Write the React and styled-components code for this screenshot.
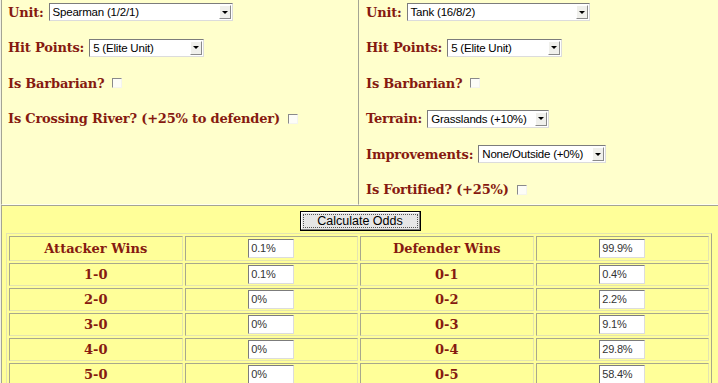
import React from 'react'
import styled, { createGlobalStyle } from 'styled-components'

const GlobalStyle = createGlobalStyle`
	body {
		margin: 0;
		background: #ffffff;
		font-family: "DejaVu Serif", Georgia, serif;
	}
`

const Page = styled.div`
	width: 718px;
	height: 383px;
	overflow: hidden;
	display: flex;
	flex-direction: column;
	border-left: 1px solid #f2f2e4;
	box-sizing: border-box;
`

const Top = styled.div`
	display: grid;
	grid-template-columns: 357px 1fr;
	height: 205px;
	flex: none;
`

const Panel = styled.div`
	background: #ffffcc;
	border-left: 1px solid #a4a494;
	border-bottom: 1px solid #fffff0;
	padding-left: ${props => props.$pad || 6}px;
	display: flex;
	flex-direction: column;
	gap: 11.6px;
`

const Row = styled.div`
	display: flex;
	align-items: center;
	height: 24px;
	white-space: nowrap;
`

const Label = styled.span`
	font-family: "DejaVu Serif", Georgia, serif;
	font-weight: bold;
	font-size: 13px;
	letter-spacing: -0.2px;
	color: #861a10;
`

const SelectBox = styled.div`
	display: inline-flex;
	align-items: stretch;
	box-sizing: border-box;
	width: ${props => props.$w}px;
	height: 18px;
	margin-left: 5px;
	background: #ffffff;
	border: 1px solid;
	border-color: #7c7c7c #dcdcdc #dcdcdc #7c7c7c;
	font-family: "Liberation Sans", Arial, sans-serif;
	font-size: 11.5px;
	color: #000;
`

const SelectText = styled.span`
	flex: 1;
	padding: 0 3px;
	line-height: 16px;
	overflow: hidden;
	letter-spacing: -0.2px;
`

const SelectArrow = styled.span`
	width: 12px;
	margin: 1px;
	box-sizing: border-box;
	background: #f0f0ec;
	border: 1px solid;
	border-color: #ffffff #8a8a8a #8a8a8a #ffffff;
	display: flex;
	align-items: center;
	justify-content: center;
	&::after {
		content: '';
		border-left: 3px solid transparent;
		border-right: 3px solid transparent;
		border-top: 3px solid #000;
	}
`

const Check = styled.span`
	display: inline-block;
	box-sizing: border-box;
	width: 10px;
	height: 10px;
	margin-left: 8px;
	background: #fdfdf8;
	border: 1px solid;
	border-color: #8a8a8a #f4f4f0 #f4f4f0 #8a8a8a;
`

const Bottom = styled.div`
	flex: 1;
	background: #ffff99;
	border-top: 1px solid #a4a494;
	border-left: 1px solid #a4a494;
	display: flex;
	flex-direction: column;
	align-items: center;
	padding-top: 5px;
`

const CalcButton = styled.button`
	width: 121px;
	height: 20px;
	padding: 0;
	background: #e6e6e6;
	border: 1px solid #000;
	outline: 1px dotted #555;
	outline-offset: -4px;
	box-shadow: inset -1px -1px 0 #808080, inset 1px 1px 0 #ffffff;
	font-family: "Liberation Sans", Arial, sans-serif;
	font-size: 12.5px;
	color: #000;
`

const OddsTable = styled.table`
	margin-top: 2px;
	align-self: flex-start;
	margin-left: 4px;
	width: 706px;
	flex: none;
	border-collapse: separate;
	border-spacing: 2px;
	border: 1px solid;
	border-color: #e4e4b0 #a8a88c #a8a88c #e4e4b0;
	table-layout: fixed;
`

const Cell = styled.td`
	height: ${props => (props.$head ? 23 : 21)}px;
	padding: 0;
	text-align: center;
	border: 1px solid;
	border-color: #a8a88c #e4e4b0 #e4e4b0 #a8a88c;
	font-family: "DejaVu Serif", Georgia, serif;
	font-weight: bold;
	font-size: 13px;
	color: #861a10;
`

const Percent = styled.span`
	display: inline-block;
	box-sizing: border-box;
	width: 46px;
	height: 19px;
	vertical-align: middle;
	text-align: left;
	padding: 0 2px;
	background: #ffffff;
	border: 1px solid;
	border-color: #7c7c7c #dcdcdc #dcdcdc #7c7c7c;
	font-family: "Liberation Sans", Arial, sans-serif;
	font-weight: normal;
	font-size: 11px;
	line-height: 17px;
	color: #333;
	letter-spacing: -0.2px;
`

const Select = ({ w, children }) => (
	<SelectBox $w={w}>
		<SelectText>{children}</SelectText>
		<SelectArrow />
	</SelectBox>
)

const results = [
	['Attacker Wins', '0.1%', 'Defender Wins', '99.9%'],
	['1-0', '0.1%', '0-1', '0.4%'],
	['2-0', '0%', '0-2', '2.2%'],
	['3-0', '0%', '0-3', '9.1%'],
	['4-0', '0%', '0-4', '29.8%'],
	['5-0', '0%', '0-5', '58.4%'],
]

export default function App() {
	return (
		<Page>
			<GlobalStyle />
			<Top>
				<Panel $pad={6}>
					<Row>
						<Label>Unit:</Label>
						<Select w={184}>Spearman (1/2/1)</Select>
					</Row>
					<Row>
						<Label>Hit Points:</Label>
						<Select w={115}>5 (Elite Unit)</Select>
					</Row>
					<Row>
						<Label>Is Barbarian?</Label>
						<Check />
					</Row>
					<Row>
						<Label>Is Crossing River? (+25% to defender)</Label>
						<Check />
					</Row>
				</Panel>
				<Panel $pad={7}>
					<Row>
						<Label>Unit:</Label>
						<Select w={183}>Tank (16/8/2)</Select>
					</Row>
					<Row>
						<Label>Hit Points:</Label>
						<Select w={115}>5 (Elite Unit)</Select>
					</Row>
					<Row>
						<Label>Is Barbarian?</Label>
						<Check />
					</Row>
					<Row>
						<Label>Terrain:</Label>
						<Select w={122}>Grasslands (+10%)</Select>
					</Row>
					<Row>
						<Label>Improvements:</Label>
						<Select w={128}>None/Outside (+0%)</Select>
					</Row>
					<Row>
						<Label>Is Fortified? (+25%)</Label>
						<Check />
					</Row>
				</Panel>
			</Top>
			<Bottom>
				<CalcButton>Calculate Odds</CalcButton>
				<OddsTable>
					<tbody>
						{results.map((r, i) => (
							<tr key={i}>
								<Cell $head={i === 0}>{r[0]}</Cell>
								<Cell $head={i === 0}><Percent>{r[1]}</Percent></Cell>
								<Cell $head={i === 0}>{r[2]}</Cell>
								<Cell $head={i === 0}><Percent>{r[3]}</Percent></Cell>
							</tr>
						))}
					</tbody>
				</OddsTable>
			</Bottom>
		</Page>
	)
}
